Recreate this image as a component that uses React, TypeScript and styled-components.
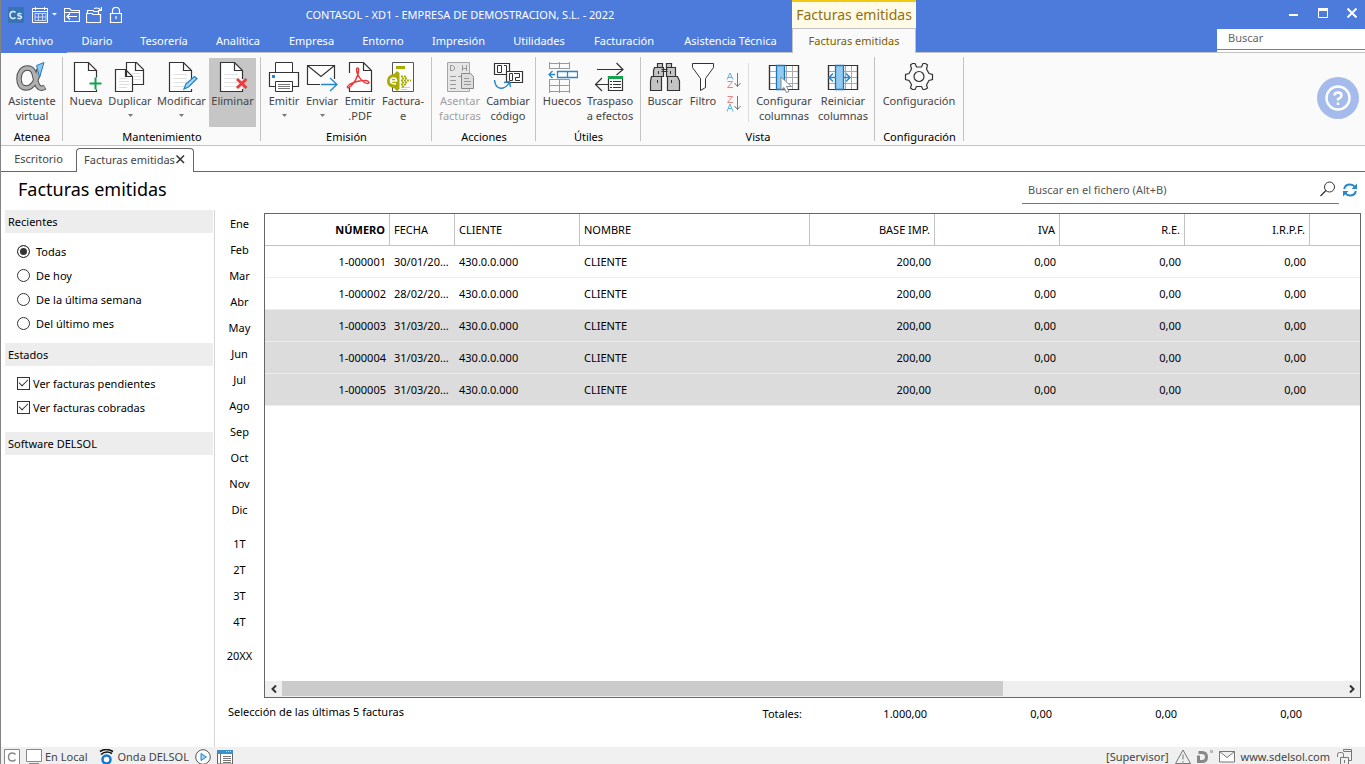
import React from "react";
import styled, { createGlobalStyle, css } from "styled-components";

const GlobalStyle = createGlobalStyle`
  *, *::before, *::after { box-sizing: border-box; }
  body {
    margin: 0;
    background: #fff;
    color: #000;
    font-family: "Noto Sans", "Open Sans", sans-serif;
    font-size: 11px;
    line-height: 15px;
  }
  button, input { font: inherit; color: inherit; }
  svg { display: block; flex: none; }
`;

const bareButton = css`
  border: 0;
  padding: 0;
  background: none;
  cursor: pointer;
`;

/* ---------- Window frame ---------- */

const AppWindow = styled.div`
  display: flex;
  flex-direction: column;
  min-height: 100vh;
  border-left: 1px solid #848484;
`;

const Header = styled.header`
  display: flex;
  height: 53px;
  background: #4d7bdb;
  color: #fff;
`;

const HeaderMain = styled.div`
  width: 791px;
  flex: none;
`;

const QuickBar = styled.div`
  display: flex;
  align-items: center;
  height: 29px;
  padding-left: 7px;
`;

const QuickButton = styled.button<{ $gap?: number }>`
  ${bareButton}
  margin-right: ${(p) => p.$gap ?? 6}px;
`;

const WindowTitle = styled.h1`
  flex: 1;
  margin: 0;
  font-size: 11px;
  font-weight: 400;
  text-align: center;
`;

const MenuTabs = styled.nav`
  display: flex;
  height: 24px;
`;

const MenuTab = styled.button<{ $width: number; $file?: boolean }>`
  ${bareButton}
  width: ${(p) => p.$width}px;
  flex: none;
  border-bottom: 1px solid ${(p) => (p.$file ? "transparent" : "#c3c3c3")};
  white-space: nowrap;
`;

const ContextTab = styled.div`
  display: flex;
  flex-direction: column;
  width: 124px;
  flex: none;
  background: #fffbe6;
  border-top: 2px solid #f2c811;
  color: #8f7112;
`;

const ContextTitle = styled.span`
  height: 26px;
  font-size: 14px;
  line-height: 26px;
  text-align: center;
  white-space: nowrap;
`;

const ContextButton = styled.button`
  ${bareButton}
  flex: 1;
  padding-bottom: 2px;
  background: #fafafa;
  border: 1px solid #c3c3c3;
  border-bottom: 0;
  color: #7a5c00;
`;

const HeaderEnd = styled.div`
  display: flex;
  flex: 1;
  flex-direction: column;
  align-items: flex-end;
  border-bottom: 1px solid #c3c3c3;
`;

const WindowControls = styled.div`
  display: flex;
  gap: 19px;
  height: 29px;
  padding: 8px 8px 0 0;
`;

const WindowButton = styled.button`
  ${bareButton}
  height: 10px;
`;

const GlobalSearch = styled.label`
  flex: 1;
  width: 148px;
  background: #fff;
`;

const GlobalSearchInput = styled.input`
  display: block;
  width: 100%;
  height: 21px;
  padding: 0 11px 3px;
  border: 0;
  border-bottom: 1px solid #808080;
  outline: 0;
  background: #fff;
  &::placeholder { color: #666; opacity: 1; }
`;

/* ---------- Ribbon ---------- */

const Ribbon = styled.section`
  display: flex;
  height: 93px;
  background: #fafafa;
  border-bottom: 1px solid #c3c3c3;
`;

const RibbonGroup = styled.div<{ $width: number }>`
  display: flex;
  flex-direction: column;
  flex: none;
  width: ${(p) => p.$width}px;
  height: 84px;
  margin-top: 4px;
  border-right: 1px solid #c3c3c3;
`;

const RibbonItems = styled.div`
  display: flex;
  flex: none;
  height: 72px;
  padding: 1px 0 0 3px;
`;

const RibbonCaption = styled.span`
  padding-left: 1px;
  line-height: 16px;
  text-align: center;
`;

const RibbonButton = styled.button<{ $width: number; $active?: boolean }>`
  ${bareButton}
  display: flex;
  flex-direction: column;
  align-items: center;
  flex: none;
  width: ${(p) => p.$width}px;
  height: 69px;
  padding-top: 3px;
  background: ${(p) => (p.$active ? "#c6c6c6" : "none")};
  color: #444;
  &:disabled { color: #a0a0a0; }
`;

const RibbonLabel = styled.span`
  white-space: pre;
  text-align: center;
`;

const SortStack = styled.div`
  display: flex;
  flex-direction: column;
  align-items: center;
  gap: 6px;
  width: 26px;
  padding-top: 14px;
`;

const SortButton = styled.button`
  ${bareButton}
`;

const RibbonDivider = styled.span`
  width: 1px;
  height: 59px;
  margin: 5px 5px 0 2px;
  background: #dcdcdc;
`;

const HelpButton = styled.button`
  ${bareButton}
  display: grid;
  place-items: center;
  align-self: center;
  width: 42px;
  height: 42px;
  margin: 0 6px 2px auto;
  border-radius: 50%;
  background: #a5bbec;
`;

/* ---------- Document tabs ---------- */

const DocTabs = styled.nav`
  display: flex;
  align-items: flex-end;
  height: 26px;
  border-bottom: 1px solid #666;
`;

const DocTab = styled.button`
  ${bareButton}
  width: 75px;
  height: 25px;
  color: #444;
`;

const ActiveDocTab = styled.div`
  display: flex;
  align-items: center;
  justify-content: space-between;
  width: 118px;
  height: 24px;
  margin-bottom: -1px;
  padding: 0 8px 2px 7px;
  border: 1px solid #666;
  border-bottom: 0;
  border-radius: 4px 4px 0 0;
  background: #fff;
  color: #444;
  white-space: nowrap;
`;

const CloseTab = styled.button`
  ${bareButton}
`;

/* ---------- Page ---------- */

const PageHead = styled.div`
  display: flex;
  justify-content: space-between;
  height: 38px;
  padding: 0 8px 0 17px;
`;

const PageTitle = styled.h2`
  margin: 0;
  font-size: 18px;
  font-weight: 400;
  line-height: 34px;
`;

const FileSearch = styled.div`
  display: flex;
  align-items: center;
  height: 32px;
  padding-top: 4px;
`;

const FileSearchField = styled.label`
  display: flex;
  align-items: center;
  width: 317px;
  height: 28px;
  margin-right: 4px;
  padding: 0 3px 1px 6px;
  border-bottom: 1px solid #777;
`;

const FileSearchInput = styled.input`
  flex: 1;
  min-width: 0;
  padding: 0;
  border: 0;
  outline: 0;
  background: none;
  &::placeholder { color: #555; opacity: 1; }
`;

const Body = styled.div`
  display: flex;
  flex: 1;
`;

const Sidebar = styled.aside`
  flex: none;
  width: 214px;
  padding: 0 1px 0 4px;
  border-right: 1px solid #d6d6d6;
`;

const SideHeading = styled.h3`
  height: 23px;
  margin: 0;
  padding-left: 3px;
  background: #ededed;
  font-size: 11px;
  font-weight: 400;
  line-height: 23px;
`;

const OptionList = styled.div<{ $top: number; $bottom: number }>`
  padding: ${(p) => p.$top}px 0 ${(p) => p.$bottom}px 12px;
`;

const Option = styled.label<{ $gap: number }>`
  display: flex;
  align-items: center;
  gap: ${(p) => p.$gap}px;
  height: 24px;
`;

const Radio = styled.input`
  appearance: none;
  width: 13px;
  height: 13px;
  margin: 0;
  border: 1px solid #333;
  border-radius: 50%;
  background: #fff;
  &:checked {
    background: #333;
    box-shadow: inset 0 0 0 2px #fff;
  }
`;

const Checkbox = styled.input`
  appearance: none;
  display: grid;
  place-items: center;
  width: 13px;
  height: 13px;
  margin: 0;
  border: 1px solid #333;
  background: #fff;
  &:checked::before {
    content: "";
    width: 9px;
    height: 5px;
    margin-bottom: 3px;
    border: solid #333;
    border-width: 0 0 1px 1px;
    transform: rotate(-45deg);
  }
`;

const Periods = styled.nav`
  display: flex;
  flex-direction: column;
  flex: none;
  width: 49px;
`;

const PeriodGroup = styled.div`
  display: flex;
  flex-direction: column;
  margin-bottom: 8px;
`;

const PeriodButton = styled.button`
  ${bareButton}
  height: 26px;
`;

const Content = styled.main`
  display: flex;
  flex: 1;
  flex-direction: column;
  min-width: 0;
  padding: 3px 4px 0 0;
`;

const GridFrame = styled.div`
  display: flex;
  flex: 1;
  flex-direction: column;
  justify-content: space-between;
  border: 1px solid #666;
`;

const Grid = styled.table`
  width: 100%;
  border-collapse: separate;
  border-spacing: 0;
  table-layout: fixed;
`;

const HeadCell = styled.th<{ $num?: boolean; $sorted?: boolean }>`
  height: 32px;
  padding: 0 4px;
  border-right: 1px solid #c3c3c3;
  border-bottom: 1px solid #c3c3c3;
  font-weight: ${(p) => (p.$sorted ? 700 : 400)};
  text-align: ${(p) => (p.$num ? "right" : "left")};
  white-space: nowrap;
  &:last-child { border-right: 0; }
`;

const Row = styled.tr<{ $selected: boolean }>`
  background: ${(p) => (p.$selected ? "#dcdcdc" : "#fff")};
`;

const Cell = styled.td<{ $num?: boolean }>`
  height: 32px;
  padding: 0 4px;
  border-bottom: 1px solid #ededed;
  overflow: hidden;
  text-align: ${(p) => (p.$num ? "right" : "left")};
  text-overflow: ellipsis;
  white-space: nowrap;
`;

const ScrollBar = styled.div`
  display: flex;
  height: 16px;
  background: #efefef;
`;

const ScrollButton = styled.button`
  ${bareButton}
  display: grid;
  place-items: center;
  width: 17px;
  height: 15px;
`;

const ScrollTrack = styled.div`
  flex: 1;
`;

const ScrollThumb = styled.div`
  width: 68%;
  height: 15px;
  background: #cbcbcb;
`;

const Summary = styled.footer`
  display: flex;
  align-items: flex-start;
  height: 49px;
  margin-left: -36px;
  padding-top: 6px;
`;

const SummaryText = styled.span`
  width: 449px;
`;

const Total = styled.span`
  width: 125px;
  padding-top: 2px;
  text-align: right;
`;

/* ---------- Status bar ---------- */

const StatusBar = styled.footer`
  display: flex;
  align-items: flex-start;
  height: 17px;
  padding: 2px 12px 0 3px;
  overflow: hidden;
  background: #f0f0f0;
  color: #444;
`;

const StatusItem = styled.span<{ $gap?: number }>`
  display: flex;
  gap: 3px;
  margin-right: ${(p) => p.$gap ?? 6}px;
`;

const StatusSpacer = styled.span`
  flex: 1;
`;

const StatusLink = styled.a`
  margin-right: 7px;
  color: inherit;
  text-decoration: none;
`;

/* ---------- Icons ---------- */

type IconProps = { w?: number; h?: number; children: React.ReactNode };

const Icon = ({ w = 32, h = 32, children }: IconProps) => (
  <svg width={w} height={h} viewBox={`0 0 ${w} ${h}`} fill="none" stroke="#333" aria-hidden="true">
    {children}
  </svg>
);

const DocLines = ({ x = 8, y = 13 }: { x?: number; y?: number }) => (
  <path d={[0, 4, 8, 12].map((d) => `M${x} ${y + d + 0.5}h14`).join("")} stroke="#e2e2e2" />
);

const Page = () => (
  <path d="M26.5 18V9.5L18.5 1.5H4.5V30.5H26.5V28M18.5 1.5V9.5H26.5" fill="#fff" strokeWidth="1.2" />
);

const AlphaIcon = () => (
  <Icon>
    <path
      d="M23 8C22 16 18 27 10 27C4.500 27 3 22 3 17.500C3 12 6 7 11.500 7C19 7 18.500 16 20.500 22C22 27 25 28.500 29 26"
      stroke="#4f4f4f"
      strokeWidth="5.500"
    />
    <path
      d="M23 8C22 16 18 27 10 27C4.500 27 3 22 3 17.500C3 12 6 7 11.500 7C19 7 18.500 16 20.500 22C22 27 25 28.500 28.500 26.300"
      stroke="#b0b0b0"
      strokeWidth="3.500"
    />
    <path d="M20.500 4.500L28 1.500L23.500 16.500Z" fill="#8cc6ee" stroke="#2a7ab8" />
  </Icon>
);

const NewIcon = () => (
  <Icon>
    <Page />
    <path d="M25.500 16.500V28.500M19.500 22.500H31.500" stroke="#fafafa" strokeWidth="4" />
    <path d="M25.500 16.500V28.500M19.500 22.500H31.500" stroke="#16a34f" strokeWidth="2" />
  </Icon>
);

const DuplicateIcon = () => (
  <Icon>
    <path d="M12.500 1.500H22.500L29.500 8.500V23.500H12.500ZM21.500 1.500V9.500H29.500" fill="#fff" strokeWidth="1.2" />
    <path d="M18 12.500h8M20 15.500h7M20 18.500h7" stroke="#ddd" />
    <path d="M1.500 8.500H11.500L18.500 15.500V30.500H1.500ZM11.500 8.500V15.500H18.500" fill="#fff" strokeWidth="1.2" />
    <path d="M5 17.500h8M5 20.500h10M5 23.500h10M5 26.500h8" stroke="#ddd" />
  </Icon>
);

const EditIcon = () => (
  <Icon>
    <g transform="translate(-1 0)">
      <Page />
      <DocLines />
    </g>
    <path d="M18 28L20 23L28.500 15.500L31 17.500L22.500 26Z" fill="#a9d6f5" stroke="#2787c9" strokeWidth="1.300" />
  </Icon>
);

const DeleteIcon = () => (
  <Icon>
    <g transform="translate(-1 0)">
      <Page />
      <DocLines />
    </g>
    <path d="M20 18L29.500 27M29.500 18L20 27" stroke="#ee3a3a" strokeWidth="3" />
  </Icon>
);

const PrinterIcon = () => (
  <Icon>
    <path d="M7.500 11V1.500H24.500V11" fill="#fff" />
    <path d="M1.500 11.500H30.500V25.500H1.500Z" fill="#fff" strokeWidth="1.200" />
    <path d="M4 14h3v3h-3z" fill="#2787c9" stroke="none" />
    <path d="M7.500 20.500H24.500V30.500H7.500Z" fill="#fff" />
    <path d="M10 23.500h12M10 25.500h12M10 27.500h12" stroke="#777" />
  </Icon>
);

const SendIcon = () => (
  <Icon>
    <path d="M28.500 18V4.500H1.500V23.500H14M1.500 4.500L15 15.500L28.500 4.500" fill="#fff" strokeWidth="1.200" />
    <path d="M15 23.500H31M24 17L31 23.500L24 30" stroke="#2787c9" strokeWidth="1.300" />
  </Icon>
);

const PdfIcon = () => (
  <Icon>
    <path d="M5.500 12V1.500H19.500L27.500 9.500V30.500H5.500V27M19.500 1.500V9.500H27.500" fill="#fff" strokeWidth="1.200" />
    <path
      d="M13.500 7C12 7 12.500 11 14 14C16 18 20 22.500 23.500 22.500C26 22.500 25.500 19.500 21 19.500C15 19.500 9 21.500 5.500 23.500C2.500 25.500 3 27.500 5 26.500C8 25 12 19 13.500 14.500C15 10 15 7 13.500 7Z"
      stroke="#e8393c"
      strokeWidth="1.500"
    />
  </Icon>
);

const EInvoiceIcon = () => (
  <Icon>
    <path d="M5.500 1.500H26.500V30.500H5.500Z" fill="#fff" stroke="#555" />
    <path d="M14 26.500h9M14 28.500h6" stroke="#ccc" />
    <path d="M9 5h9v3h-9z" fill="#a8ad00" stroke="none" />
    <path d="M7 13L10 10L12.500 12V28L10 30L7 27Q0 26 0 20Q0 14 7 13Z" fill="#a8ad00" stroke="none" />
    <path d="M3.500 20H9.500Q9.500 17 6.500 17Q3.500 17 3.500 20Q3.500 23 9 23" stroke="#fff" strokeWidth="1.500" />
    <path d="M14 15.500h6M14 19.500h10M14 23.500h6" stroke="#a8ad00" strokeWidth="2" strokeDasharray="2 1" />
    <path d="M15 17.500h6M15 21.500h6M15 25.500h3" stroke="#a8ad00" strokeWidth="2" strokeDasharray="2 1" />
  </Icon>
);

const PostIcon = () => (
  <Icon>
    <path d="M3.500 1.500H25.500V30.500H3.500Z" fill="#e6e6e6" stroke="#a5a5a5" />
    <path
      d="M6.500 4V10M6.500 4.500H8.500L10.500 6V8.500L8.500 9.500H6.500M18.500 4V10M22.500 4V10M18.500 7.500H22.500M6 15.500h6M6 19.500h6M6 23.500h6M6 27.500h6M14 15.500h9"
      stroke="#999"
    />
    <path d="M17.500 12.500H26.500L29.500 15.500V27.500H17.500Z" fill="#ddd" stroke="#888" />
    <path d="M20 17.500h5M20 20.500h7M20 23.500h7" stroke="#999" />
  </Icon>
);

const RenumberIcon = () => (
  <Icon>
    <path d="M2.500 2.500H17.500V13.500H2.500Z" fill="#fff" strokeWidth="1.200" />
    <path d="M5.500 4.500H9.500V11.500H5.500ZM12 4.500H14.500V12" />
    <path d="M14.500 10.500H30.500V21.500H14.500Z" fill="#fff" strokeWidth="1.200" />
    <path d="M17.500 12.500H20.500V19.500H17.500ZM22 12.500H27.500V16.500H23.500V19.500H28" />
    <path d="M2.500 19C3 26 7 28 11 27Q15 26 17.500 21M12 21.500L17.500 20.500L18.500 26" stroke="#2787c9" strokeWidth="1.400" />
  </Icon>
);

const GapsIcon = () => (
  <Icon>
    <path
      d="M3.500 1V7.500M13.500 1V7.500M23.500 1V7.500M3 7.500H24M3 2.500H24M3 18.500H23.500V32M3.500 18.500V32M13.500 18.500V32M3 24.500H24M3 30.500H24"
      stroke="#999"
    />
    <path d="M11.500 10.500H31.500V16.500H11.500ZM21.500 10.500V16.500M9 13.500H3M6.500 10L3 13.500L6.500 17" fill="#fff" stroke="#2787c9" strokeWidth="1.300" />
  </Icon>
);

const TransferIcon = () => (
  <Icon>
    <path d="M3 8.500H29M22.500 2L29 8.500L22.500 14M1.500 23.500H14M8 17L1.500 23.500L8 30" strokeWidth="1.200" />
    <path d="M14.500 15.500H28.500V29.500H14.500Z" fill="#fff" strokeWidth="1.200" />
    <path d="M14 16.500H29" stroke="#16a34f" strokeWidth="3" />
    <path d="M16 20.500h2M16 23.500h2M16 26.500h2M19 20.500h8M19 23.500h8M19 26.500h8" />
  </Icon>
);

const BinocularsIcon = () => (
  <Icon>
    <g fill="#c4c4c4" strokeWidth="1.200">
      <path d="M8.500 2.500H13.500V6.500H8.500ZM17.500 2.500H22.500V6.500H17.500Z" />
      <path d="M5.500 6.500H14.500V15.500H4.500V9.500ZM17.500 6.500H26.500V15.500H17.500Z" />
      <path d="M2.500 15.500H12.500V29.500H1.500V20ZM18.500 15.500H28.500L30.500 20V29.500H18.500Z" />
    </g>
    <path d="M12.500 8.500H18.500M12.500 10.500H18.500M8.500 19V22M22.500 19V22M9.500 10V13M21.500 10V13" />
  </Icon>
);

const FunnelIcon = () => (
  <Icon>
    <path d="M5.500 2.500H26.500V6.500L18.500 17.500V26.500L13.500 29.500V17.500L5.500 6.500Z" fill="#fff" />
  </Icon>
);

const SortIcon = ({ desc = false }: { desc?: boolean }) => (
  <Icon w={15} h={17}>
    <path d={desc ? "M1 16.500L4 9L7 16.500M2 13.500H6" : "M1 7.500L4 1L7 7.500M2 5.500H6"} stroke="#62b1e0" />
    <path d={desc ? "M1.500 1.500H6.500L1.500 7.500H7" : "M1.500 9.500H6.500L1.500 15.500H7"} stroke="#f08080" />
    <path d="M11.500 1V14.500M8.500 11L11.500 14.500L14.500 11" stroke="#777" />
  </Icon>
);

const ColumnGridBase = ({ x }: { x: number }) => (
  <>
    <path d="M1.500 4.500H30.500V28.500H1.500Z" fill="#fff" strokeWidth="1.200" />
    <path d="M18.500 5V28M24.500 5V28M2 10.500H30M2 16.500H30M2 22.500H30" stroke="#aaa" />
    <path d="M1.500 4.500H30.500V28.500H1.500Z" strokeWidth="1.200" />
    <path d={`M${x} 4.500h8v24h-8z`} fill="#92caf0" stroke="#1b75bb" strokeWidth="1.300" />
  </>
);

const ColumnsIcon = () => (
  <Icon>
    <ColumnGridBase x={8.5} />
    <path d="M13 16V29L16 26.500L18.500 31.500L21 30.500L18.500 25.500H23.500Z" fill="#fff" stroke="#888" />
  </Icon>
);

const ResetColumnsIcon = () => (
  <Icon>
    <ColumnGridBase x={8.5} />
    <path d="M9 16.500H2M6 12.500L2 16.500L6 20.500M16 16.500H23M19 12.500L23 16.500L19 20.500" stroke="#2787c9" strokeWidth="1.500" />
  </Icon>
);

const GearIcon = () => (
  <Icon>
    <path
      d="M9.500 2.500H12L13.500 6H18.500L20 2.500H22.500L24.500 4L23.500 8L26 12.500L29.500 13.500V18.500L26 19.500L23.500 24L24.500 27L22 28.500H20L18.500 25.500H13.500L12 28.500H9.500L7.500 27L8.500 23.500L6 19.500L2.500 18.500V13.500L6 12.500L8.500 8L7.500 4Z"
      strokeWidth="1.200"
    />
    <circle cx="16" cy="15.500" r="5" strokeWidth="1.200" />
  </Icon>
);

const DropArrow = () => (
  <Icon w={5} h={15}>
    <path d="M0 6H5L2.500 9Z" fill="#777" stroke="none" />
  </Icon>
);

const HelpIcon = () => (
  <Icon w={26} h={26}>
    <g stroke="#fff" strokeWidth="2.400">
      <circle cx="13" cy="13" r="11.500" />
      <path d="M9.500 10.500Q9.500 7.500 13 7.500Q16.500 7.500 16.500 10.500Q16.500 12.500 13 14V15.500M13 17.500V20" />
    </g>
  </Icon>
);

/* ---------- Data ---------- */

const MENU: [string, number, boolean?][] = [
  ["Archivo", 66, true],
  ["Diario", 60],
  ["Tesorería", 74],
  ["Analítica", 74],
  ["Empresa", 73],
  ["Entorno", 70],
  ["Impresión", 81],
  ["Utilidades", 80],
  ["Facturación", 90],
  ["Asistencia Técnica", 123],
];

type Action = {
  label: string;
  width: number;
  icon: React.ReactNode;
  arrow?: boolean;
  active?: boolean;
  disabled?: boolean;
};

const ACTIONS: Record<string, Action[]> = {
  Atenea: [{ label: "Asistente\nvirtual", width: 56, icon: <AlphaIcon /> }],
  Mantenimiento: [
    { label: "Nueva", width: 40, icon: <NewIcon /> },
    { label: "Duplicar", width: 48, icon: <DuplicateIcon />, arrow: true },
    { label: "Modificar", width: 55, icon: <EditIcon />, arrow: true },
    { label: "Eliminar", width: 47, icon: <DeleteIcon />, active: true },
  ],
  Emisión: [
    { label: "Emitir", width: 40, icon: <PrinterIcon />, arrow: true },
    { label: "Enviar", width: 36, icon: <SendIcon />, arrow: true },
    { label: "Emitir\n.PDF", width: 40, icon: <PdfIcon /> },
    { label: "Factura-\ne", width: 46, icon: <EInvoiceIcon /> },
  ],
  Acciones: [
    { label: "Asentar\nfacturas", width: 50, icon: <PostIcon />, disabled: true },
    { label: "Cambiar\ncódigo", width: 46, icon: <RenumberIcon /> },
  ],
  Útiles: [
    { label: "Huecos", width: 46, icon: <GapsIcon /> },
    { label: "Traspaso\na efectos", width: 50, icon: <TransferIcon /> },
  ],
  Búsqueda: [
    { label: "Buscar", width: 42, icon: <BinocularsIcon /> },
    { label: "Filtro", width: 34, icon: <FunnelIcon /> },
  ],
  Columnas: [
    { label: "Configurar\ncolumnas", width: 60, icon: <ColumnsIcon /> },
    { label: "Reiniciar\ncolumnas", width: 58, icon: <ResetColumnsIcon /> },
  ],
  Configuración: [{ label: "Configuración", width: 82, icon: <GearIcon /> }],
};

const RECENT = ["Todas", "De hoy", "De la última semana", "Del último mes"];
const STATES = ["Ver facturas pendientes", "Ver facturas cobradas"];
const PERIODS = [
  ["Ene", "Feb", "Mar", "Abr", "May", "Jun", "Jul", "Ago", "Sep", "Oct", "Nov", "Dic"],
  ["1T", "2T", "3T", "4T"],
  ["20XX"],
];

const COLUMNS: { title: string; width?: number; num?: boolean; sorted?: boolean }[] = [
  { title: "NÚMERO", width: 125, num: true, sorted: true },
  { title: "FECHA", width: 65 },
  { title: "CLIENTE", width: 125 },
  { title: "NOMBRE", width: 230 },
  { title: "BASE IMP.", width: 125, num: true },
  { title: "IVA", width: 125, num: true },
  { title: "R.E.", width: 125, num: true },
  { title: "I.R.P.F.", width: 125, num: true },
  { title: "" },
];

const INVOICES = [
  ["1-000001", "30/01/2022"],
  ["1-000002", "28/02/2022"],
  ["1-000003", "31/03/2022"],
  ["1-000004", "31/03/2022"],
  ["1-000005", "31/03/2022"],
].map(([number, date], i) => ({
  selected: i > 1,
  cells: [number, date, "430.0.0.000", "CLIENTE", "200,00", "0,00", "0,00", "0,00", ""],
}));

const TOTALS = ["Totales:", "1.000,00", "0,00", "0,00", "0,00"];

const ActionButtons = ({ name }: { name: string }) => (
  <>
    {ACTIONS[name].map((a) => (
      <RibbonButton key={a.label} $width={a.width} $active={a.active} disabled={a.disabled}>
        {a.icon}
        <RibbonLabel>{a.label}</RibbonLabel>
        {a.arrow && <DropArrow />}
      </RibbonButton>
    ))}
  </>
);

const Group = ({ name, width }: { name: string; width: number }) => (
  <RibbonGroup $width={width}>
    <RibbonItems>
      <ActionButtons name={name} />
    </RibbonItems>
    <RibbonCaption>{name}</RibbonCaption>
  </RibbonGroup>
);

export default function App() {
  return (
    <>
      <GlobalStyle />
      <AppWindow>
        <Header>
          <HeaderMain>
            <QuickBar>
              <QuickButton $gap={8} aria-label="CONTASOL">
                <Icon w={16} h={16}>
                  <rect width="16" height="16" rx="1" fill="#3674b5" stroke="none" />
                  <path d="M7.500 5.500Q6.500 4.200 4.500 4.500Q2 5 2 8Q2 11 4.500 11.500Q6.500 11.800 7.500 10.500M13.500 7Q12.500 6.300 11 6.500Q9.500 7 10 8.200Q10.500 8.800 12 9Q13.800 9.500 13.500 10.500Q13 11.800 11 11.600Q10 11.500 9.300 11" stroke="#dcebf7" strokeWidth="1.500" />
                </Icon>
              </QuickButton>
              <QuickButton $gap={7} aria-label="Calendario">
                <Icon w={25} h={16}>
                  <g stroke="#fff">
                    <path d="M.5 1.500H15.500V15.500H.5ZM1 4.500H15M3.500 0V3M12.500 0V3" />
                    <path d="M3 6.500H14V13.500H3ZM3 10H14M6.500 6V14M10.500 6V14" stroke="#c7d5f4" />
                    <path d="M20 6H25L22.500 8.500Z" fill="#fff" stroke="none" />
                  </g>
                </Icon>
              </QuickButton>
              <QuickButton aria-label="Cambiar de empresa">
                <Icon w={16} h={16}>
                  <path d="M.5 14.500V1.500H5.500L7.500 3.500H15.500V14.500ZM.5 5.500H15.500M13 9.500H3M6 6.500L3 9.500L6 12.500" stroke="#fff" strokeWidth="1.200" />
                </Icon>
              </QuickButton>
              <QuickButton aria-label="Abrir empresa">
                <Icon w={16} h={16}>
                  <path d="M.5 15.500V6.500H6L7 7.500H14.500V15.500ZM1.500 6.500V3.500H7L8 4.500H12.500V7M8 1.500Q12 0 15 3M15.500 0V3.500H12" stroke="#fff" strokeWidth="1.200" />
                </Icon>
              </QuickButton>
              <QuickButton aria-label="Bloquear">
                <Icon w={14} h={16}>
                  <path d="M2.500 6.500H13.500V15.500H2.500ZM4.500 6V3.500Q4.500 .5 8 .5Q11.500 .5 11.500 3.500V6M8 9V12" stroke="#fff" strokeWidth="1.200" />
                </Icon>
              </QuickButton>
              <WindowTitle>CONTASOL - XD1 - EMPRESA DE DEMOSTRACION, S.L. - 2022</WindowTitle>
            </QuickBar>
            <MenuTabs>
              {MENU.map(([label, width, file]) => (
                <MenuTab key={label} $width={width} $file={file}>{label}</MenuTab>
              ))}
            </MenuTabs>
          </HeaderMain>
          <ContextTab>
            <ContextTitle>Facturas emitidas</ContextTitle>
            <ContextButton>Facturas emitidas</ContextButton>
          </ContextTab>
          <HeaderEnd>
            <WindowControls>
              <WindowButton aria-label="Minimizar">
                <Icon w={10} h={10}><path d="M0 7H9" stroke="#fff" strokeWidth="2" /></Icon>
              </WindowButton>
              <WindowButton aria-label="Maximizar">
                <Icon w={10} h={10}>
                  <path d="M.5 1V9.500H9.500V1" stroke="#fff" />
                  <path d="M0 1.500H10" stroke="#fff" strokeWidth="3" />
                </Icon>
              </WindowButton>
              <WindowButton aria-label="Cerrar">
                <Icon w={10} h={10}><path d="M.5 .5L9.500 9.500M9.500 .5L.5 9.500" stroke="#fff" strokeWidth="2" /></Icon>
              </WindowButton>
            </WindowControls>
            <GlobalSearch>
              <GlobalSearchInput type="text" placeholder="Buscar" aria-label="Buscar" />
            </GlobalSearch>
          </HeaderEnd>
        </Header>

        <Ribbon>
          <Group name="Atenea" width={62} />
          <Group name="Mantenimiento" width={198} />
          <Group name="Emisión" width={171} />
          <Group name="Acciones" width={104} />
          <Group name="Útiles" width={105} />
          <RibbonGroup $width={234}>
            <RibbonItems>
              <ActionButtons name="Búsqueda" />
              <SortStack>
                <SortButton aria-label="Orden ascendente"><SortIcon /></SortButton>
                <SortButton aria-label="Orden descendente"><SortIcon desc /></SortButton>
              </SortStack>
              <RibbonDivider />
              <ActionButtons name="Columnas" />
            </RibbonItems>
            <RibbonCaption>Vista</RibbonCaption>
          </RibbonGroup>
          <Group name="Configuración" width={89} />
          <HelpButton aria-label="Ayuda"><HelpIcon /></HelpButton>
        </Ribbon>

        <DocTabs>
          <DocTab>Escritorio</DocTab>
          <ActiveDocTab>
            <span>Facturas emitidas</span>
            <CloseTab aria-label="Cerrar pestaña">
              <Icon w={9} h={9}><path d="M.5 .5L8 8M8 .5L.5 8" strokeWidth="1.500" /></Icon>
            </CloseTab>
          </ActiveDocTab>
        </DocTabs>

        <PageHead>
          <PageTitle>Facturas emitidas</PageTitle>
          <FileSearch>
            <FileSearchField>
              <FileSearchInput type="text" placeholder="Buscar en el fichero (Alt+B)" aria-label="Buscar en el fichero" />
              <Icon w={16} h={16}>
                <circle cx="9.500" cy="6" r="5" />
                <path d="M6 9.500L.5 15" strokeWidth="1.200" />
              </Icon>
            </FileSearchField>
            <QuickButton $gap={0} aria-label="Actualizar">
              <Icon w={14} h={14}>
                <path d="M1.200 6Q2 1.500 7 1.500Q10 1.500 12 4M12.800 8Q12 12.500 7 12.500Q4 12.500 2 10" stroke="#2787c9" strokeWidth="2" />
                <path d="M14 0.500V6H8.500ZM0 13.500V8H5.500Z" fill="#2787c9" stroke="none" />
              </Icon>
            </QuickButton>
          </FileSearch>
        </PageHead>

        <Body>
          <Sidebar>
            <SideHeading>Recientes</SideHeading>
            <OptionList $top={6} $bottom={8}>
              {RECENT.map((label, i) => (
                <Option key={label} $gap={6}>
                  <Radio type="radio" name="recientes" defaultChecked={i === 0} />
                  {label}
                </Option>
              ))}
            </OptionList>
            <SideHeading>Estados</SideHeading>
            <OptionList $top={5} $bottom={13}>
              {STATES.map((label) => (
                <Option key={label} $gap={3}>
                  <Checkbox type="checkbox" defaultChecked />
                  {label}
                </Option>
              ))}
            </OptionList>
            <SideHeading>Software DELSOL</SideHeading>
          </Sidebar>

          <Periods>
            {PERIODS.map((group) => (
              <PeriodGroup key={group[0]}>
                {group.map((p) => <PeriodButton key={p}>{p}</PeriodButton>)}
              </PeriodGroup>
            ))}
          </Periods>

          <Content>
            <GridFrame>
              <Grid>
                <colgroup>
                  {COLUMNS.map((c, i) => <col key={i} width={c.width} />)}
                </colgroup>
                <thead>
                  <tr>
                    {COLUMNS.map((c, i) => (
                      <HeadCell key={i} $num={c.num} $sorted={c.sorted}>{c.title}</HeadCell>
                    ))}
                  </tr>
                </thead>
                <tbody>
                  {INVOICES.map((inv) => (
                    <Row key={inv.cells[0]} $selected={inv.selected}>
                      {inv.cells.map((text, i) => (
                        <Cell key={i} $num={COLUMNS[i].num}>{text}</Cell>
                      ))}
                    </Row>
                  ))}
                </tbody>
              </Grid>
              <ScrollBar>
                <ScrollButton aria-label="Desplazar a la izquierda">
                  <Icon w={6} h={8}><path d="M5 0.500L1.500 4L5 7.500" strokeWidth="2" /></Icon>
                </ScrollButton>
                <ScrollTrack><ScrollThumb /></ScrollTrack>
                <ScrollButton aria-label="Desplazar a la derecha">
                  <Icon w={6} h={8}><path d="M1 0.500L4.500 4L1 7.500" strokeWidth="2" /></Icon>
                </ScrollButton>
              </ScrollBar>
            </GridFrame>
            <Summary>
              <SummaryText>Selección de las últimas 5 facturas</SummaryText>
              {TOTALS.map((t, i) => <Total key={i}>{t}</Total>)}
            </Summary>
          </Content>
        </Body>

        <StatusBar>
          <StatusItem>
            <Icon w={16} h={16}>
              <path d="M.5 .5H15.500V15.500H.5Z" fill="#fff" stroke="#888" />
              <path d="M11.500 5.500Q10.500 4 8.500 4Q4.500 4 4.500 8Q4.500 12 8.500 12Q10.500 12 11.500 10.500" stroke="#888" strokeWidth="1.500" />
            </Icon>
          </StatusItem>
          <StatusItem $gap={12}>
            <Icon w={16} h={16}>
              <path d="M.5 .5H15.500V12.500H.5Z" fill="#fff" stroke="#888" />
              <path d="M3 14.500H13" stroke="#888" />
            </Icon>
            En Local
          </StatusItem>
          <StatusItem>
            <Icon w={15} h={16}>
              <circle cx="7.500" cy="10.500" r="4" stroke="#1478d4" strokeWidth="2.500" fill="#fff" />
              <path d="M1 2.500Q7 -1.500 14 2.500M2 5.500Q7 1 13 4.500" stroke="#111" strokeWidth="1.600" />
            </Icon>
            Onda DELSOL
          </StatusItem>
          <StatusItem>
            <Icon w={16} h={16}>
              <circle cx="8" cy="8" r="7.300" fill="#fff" stroke="#555" />
              <path d="M6 4.500L11.500 8L6 11.500Z" fill="#9bd0f5" stroke="#2787c9" />
            </Icon>
          </StatusItem>
          <StatusItem>
            <Icon w={16} h={16}>
              <path d="M.5 1.500H15.500V15H.5Z" fill="#fff" stroke="#666" />
              <path d="M0 1H16V5H0Z" fill="#3c8dcc" stroke="none" />
              <path d="M9 2.500H15" stroke="#bfe0f7" strokeDasharray="1 1" />
              <path d="M3.500 5V15M6 7.500H14M6 9.500H14M6 11.500H14M6 13.500H14" stroke="#777" />
            </Icon>
          </StatusItem>
          <StatusSpacer />
          <StatusItem>[Supervisor]</StatusItem>
          <StatusItem>
            <Icon w={16} h={16}>
              <path d="M8 1L15.500 14.500H.5Z" stroke="#777" />
              <path d="M8 5.500V10.500M8 12V13.500" stroke="#777" />
            </Icon>
          </StatusItem>
          <StatusItem>
            <Icon w={16} h={16}>
              <path d="M1.500 3.500H5Q9.500 3.500 9.500 8Q9.500 12.500 5 12.500H1.500V6.500" stroke="#888" strokeWidth="3" />
              <path d="M13 1h3v3h-3z" fill="#bbb" stroke="none" />
            </Icon>
          </StatusItem>
          <StatusItem>
            <Icon w={16} h={16}>
              <path d="M.5 2.500H15.500V13H.5ZM.5 2.500L8 8.500L15.500 2.500" fill="#fff" stroke="#777" />
            </Icon>
          </StatusItem>
          <StatusLink href="#web">www.sdelsol.com</StatusLink>
          <Icon w={16} h={16}>
            <path d="M6.500 2V.5H14.500V11.500H12M6.500 2.500H14.500M3.500 8.500H11.500V15.500H3.500ZM.5 8V5.500Q.5 3.500 2.500 3.500H4.500Q6.500 3.500 6.500 5.500V8M7.500 11V14" stroke="#777" />
          </Icon>
        </StatusBar>
      </AppWindow>
    </>
  );
}
